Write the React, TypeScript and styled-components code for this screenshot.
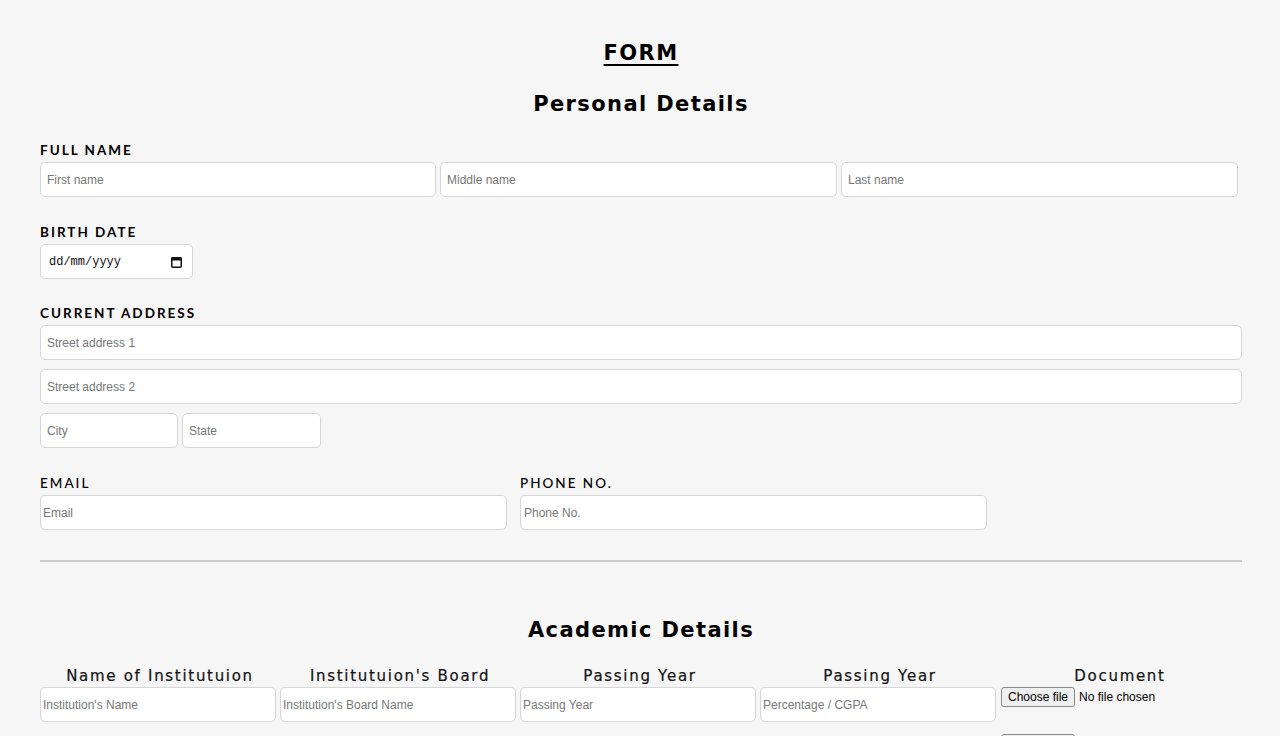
import React from "react";
import styled, { createGlobalStyle } from "styled-components";

const Global = createGlobalStyle`
  html, body { margin: 0; padding: 0; background: #f6f6f6; }
  body { font-family: "DejaVu Sans", "Open Sans", sans-serif; color: #000; }
  * { box-sizing: border-box; }
`;

const Page = styled.div`
  padding: 39px 38px 0 40px;
  height: 736px;
  overflow: hidden;
`;

const Title = styled.h1<{ $underline?: boolean; $mt?: number }>`
  margin: ${(p) => p.$mt ?? 0}px 0 0;
  text-align: center;
  font-family: "DejaVu Sans", sans-serif;
  font-weight: 700;
  font-size: 21px;
  line-height: 28px;
  letter-spacing: 1.4px;
  text-decoration: ${(p) => (p.$underline ? "underline" : "none")};
  text-decoration-thickness: 2px;
  text-underline-offset: 4px;
`;

const Label = styled.div<{ $light?: boolean }>`
  font-family: "Lato", "Open Sans", sans-serif;
  font-weight: ${(p) => (p.$light ? 500 : 700)};
  font-size: 13.5px;
  line-height: 16px;
  letter-spacing: 2px;
  margin-bottom: 4px;
  text-transform: uppercase;
`;

const Group = styled.div<{ $mt: number }>`
  margin-top: ${(p) => p.$mt}px;
`;

const Row = styled.div<{ $gap?: number; $mt?: number }>`
  display: flex;
  gap: ${(p) => p.$gap ?? 4}px;
  margin-top: ${(p) => p.$mt ?? 0}px;
`;

const Input = styled.input<{ $w?: number; $pad?: number }>`
  display: block;
  width: ${(p) => (p.$w ? `${p.$w}px` : "100%")};
  height: 35px;
  border: 1px solid #d6d6d6;
  border-radius: 5px;
  background: #fff;
  padding: 0 0 0 ${(p) => p.$pad ?? 6}px;
  font-family: "Liberation Sans", Arial, sans-serif;
  font-size: 12px;
  color: #333;
  outline: none;
  &::placeholder { color: #777; }
`;

const DateBox = styled.div`
  width: 153px;
  height: 35px;
  border: 1px solid #d6d6d6;
  border-radius: 5px;
  background: #fff;
  display: flex;
  align-items: center;
  justify-content: space-between;
  padding: 0 10px 0 8px;
  font-family: "Liberation Mono", "DejaVu Sans Mono", monospace;
  font-size: 12px;
  color: #111;
`;

const TwoCol = styled.div`
  display: grid;
  grid-template-columns: 480px 480px;
  margin-top: 27px;
`;

const Divider = styled.hr`
  margin: 30px 0 0;
  border: 0;
  border-top: 2px solid #cdcdcd;
`;

const Table = styled.div`
  display: grid;
  grid-template-columns: repeat(5, 240px);
  margin-top: 23px;
`;

const ColHead = styled.div`
  text-align: center;
  font-family: "DejaVu Sans", sans-serif;
  font-weight: 400;
  font-size: 15px;
  line-height: 18px;
  letter-spacing: 1.7px;
  margin-bottom: 2px;
  color: #111;
  -webkit-text-stroke: 0.2px #111;
`;

const Cell = styled.div`
  display: flex;
  flex-direction: column;
  gap: 27px;
`;

const FileRow = styled.div`
  display: flex;
  align-items: center;
  gap: 4px;
  padding-left: 1px;
  font-family: "Liberation Sans", Arial, sans-serif;
  font-size: 12px;
`;

const FileButton = styled.button`
  height: 20px;
  padding: 0 6px;
  border: 1px solid #8a8a8a;
  border-radius: 3px;
  background: #efefef;
  font-family: "Liberation Sans", Arial, sans-serif;
  font-size: 12px;
  color: #000;
`;

const CalendarIcon = () => (
  <svg width="11" height="12" viewBox="0 0 11 12">
    <rect x="0.75" y="1.75" width="9.5" height="9.5" rx="1" fill="none" stroke="#111" strokeWidth="1.5" />
    <rect x="0.5" y="1.5" width="10" height="3" fill="#111" />
  </svg>
);

const FileInput = () => (
  <FileRow>
    <FileButton type="button">Choose file</FileButton>
    <span>No file chosen</span>
  </FileRow>
);

export default function App() {
  return (
    <>
      <Global />
      <Page>
        <Title $underline>FORM</Title>
        <Title $mt={23}>Personal Details</Title>

        <Group $mt={24}>
          <Label>Full Name</Label>
          <Row>
            <Input $w={396} placeholder="First name" />
            <Input $w={397} placeholder="Middle name" />
            <Input $w={397} placeholder="Last name" />
          </Row>
        </Group>

        <Group $mt={27}>
          <Label>Birth Date</Label>
          <DateBox>
            <span>dd/mm/yyyy</span>
            <CalendarIcon />
          </DateBox>
        </Group>

        <Group $mt={26}>
          <Label>Current Address</Label>
          <Input placeholder="Street address 1" />
          <Row $mt={9}>
            <Input placeholder="Street address 2" />
          </Row>
          <Row $mt={9}>
            <Input $w={138} placeholder="City" />
            <Input $w={139} placeholder="State" />
          </Row>
        </Group>

        <TwoCol>
          <div>
            <Label $light>Email</Label>
            <Input $w={467} $pad={2} placeholder="Email" />
          </div>
          <div>
            <Label $light>Phone No.</Label>
            <Input $w={467} $pad={3} placeholder="Phone No." />
          </div>
        </TwoCol>

        <Divider />

        <Title $mt={54}>Academic Details</Title>

        <Table>
          <ColHead>Name of Institutuion</ColHead>
          <ColHead>Institutuion's Board</ColHead>
          <ColHead>Passing Year</ColHead>
          <ColHead>Passing Year</ColHead>
          <ColHead>Document</ColHead>
          <Input $w={236} $pad={2} placeholder="Institution's Name" />
          <Input $w={236} $pad={2} placeholder="Institution's Board Name" />
          <Input $w={236} $pad={2} placeholder="Passing Year" />
          <Input $w={236} $pad={2} placeholder="Percentage / CGPA" />
          <Cell>
            <FileInput />
            <FileInput />
          </Cell>
        </Table>
      </Page>
    </>
  );
}
